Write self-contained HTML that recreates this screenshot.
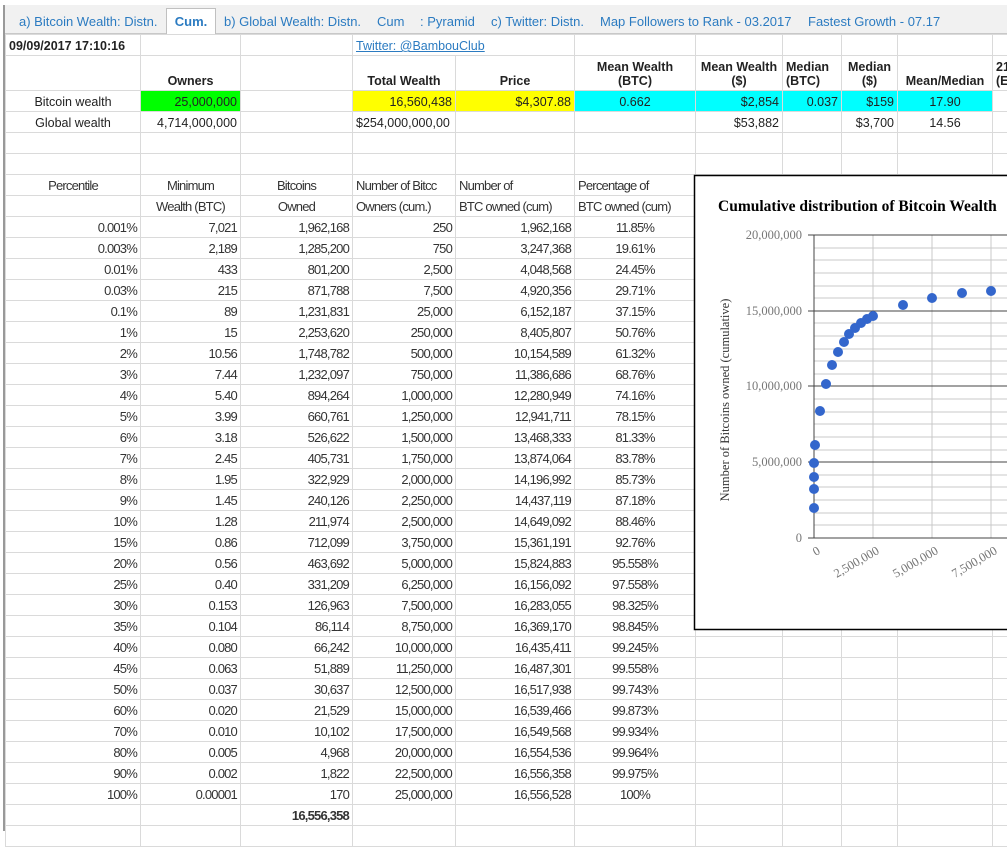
<!DOCTYPE html>
<html><head><meta charset="utf-8">
<style>
*{margin:0;padding:0;box-sizing:border-box}
body{width:1007px;height:831px;background:#fff;font-family:"Liberation Sans",Arial,sans-serif;position:relative;overflow:hidden;color:#222}
#tabs{position:absolute;left:4px;top:5px;width:1003px;height:29px;background:#f1f1f1;border-bottom:1px solid #c8c8c8}
.tab{position:absolute;top:8px;font-size:13px;color:#2b7bc1;white-space:nowrap}
#act{position:absolute;left:166px;top:8px;width:50px;height:27px;background:#fff;border:1px solid #c0c0c0;border-bottom:none;font-size:13px;color:#2b7bc1;font-weight:bold;text-align:center;padding-top:5px}
#lb{position:absolute;left:3px;top:5px;width:2px;height:826px;background:#999}
table{position:absolute;left:5px;top:34px;width:1007px;border-collapse:collapse;table-layout:fixed}
td{border:1px solid #dadada;height:21px;font-size:12.5px;padding:0 3px;white-space:nowrap;overflow:hidden;text-align:right;vertical-align:bottom;padding-bottom:2px}
.c{text-align:center}.l{text-align:left}.b{font-weight:bold}
.h2 td{height:35px;line-height:14px;font-weight:bold}
.g{background:#00ff00}.y{background:#ffff00}.cy{background:#00ffff}
.d td{font-size:13px;letter-spacing:-0.8px;color:#333}
a{color:#2b7bc1}
</style></head><body>
<div id="tabs"></div>
<div class="tab" style="left:19px;top:14px">a) Bitcoin Wealth: Distn.</div>
<div id="act">Cum.</div>
<div class="tab" style="left:224px;top:14px">b) Global Wealth: Distn.</div>
<div class="tab" style="left:377px;top:14px">Cum</div>
<div class="tab" style="left:420px;top:14px">: Pyramid</div>
<div class="tab" style="left:491px;top:14px">c) Twitter: Distn.</div>
<div class="tab" style="left:600px;top:14px">Map Followers to Rank - 03.2017</div>
<div class="tab" style="left:808px;top:14px">Fastest Growth - 07.17</div>
<table>
<colgroup><col style="width:135px"><col style="width:100px"><col style="width:112px"><col style="width:103px"><col style="width:119px"><col style="width:121px"><col style="width:87px"><col style="width:59px"><col style="width:56px"><col style="width:95px"><col style="width:20px"></colgroup>
<tr><td class="l b">09/09/2017 17:10:16</td><td></td><td></td><td class="l" colspan="2"><a href="#">Twitter: @BambouClub</a></td><td></td><td></td><td></td><td></td><td></td><td></td></tr>
<tr class="h2"><td></td><td class="c">Owners</td><td></td><td class="c">Total Wealth</td><td class="c">Price</td><td class="c">Mean Wealth<br>(BTC)</td><td class="c">Mean Wealth<br>($)</td><td class="l">Median<br>(BTC)</td><td class="c">Median<br>($)</td><td class="c">Mean/Median</td><td class="l">21<br>(E</td></tr>
<tr><td class="c">Bitcoin wealth</td><td class="g">25,000,000</td><td></td><td class="y">16,560,438</td><td class="y">$4,307.88</td><td class="cy c">0.662</td><td class="cy">$2,854</td><td class="cy">0.037</td><td class="cy">$159</td><td class="cy c">17.90</td><td></td></tr>
<tr><td class="c">Global wealth</td><td>4,714,000,000</td><td></td><td class="l">$254,000,000,00</td><td></td><td></td><td>$53,882</td><td></td><td>$3,700</td><td class="c">14.56</td><td></td></tr>
<tr><td></td><td></td><td></td><td></td><td></td><td></td><td></td><td></td><td></td><td></td><td></td></tr>
<tr><td></td><td></td><td></td><td></td><td></td><td></td><td></td><td></td><td></td><td></td><td></td></tr>
<tr class="d"><td class="c">Percentile</td><td class="c">Minimum</td><td class="c">Bitcoins</td><td class="l">Number of Bitcc</td><td class="l">Number of</td><td class="l">Percentage of</td><td></td><td></td><td></td><td></td><td></td></tr>
<tr class="d"><td></td><td class="c">Wealth (BTC)</td><td class="c">Owned</td><td class="l">Owners (cum.)</td><td class="l">BTC owned (cum)</td><td class="l">BTC owned (cum)</td><td></td><td></td><td></td><td></td><td></td></tr>
<tr class="d"><td>0.001%</td><td>7,021</td><td>1,962,168</td><td>250</td><td>1,962,168</td><td class="c">11.85%</td><td></td><td></td><td></td><td></td><td></td></tr>
<tr class="d"><td>0.003%</td><td>2,189</td><td>1,285,200</td><td>750</td><td>3,247,368</td><td class="c">19.61%</td><td></td><td></td><td></td><td></td><td></td></tr>
<tr class="d"><td>0.01%</td><td>433</td><td>801,200</td><td>2,500</td><td>4,048,568</td><td class="c">24.45%</td><td></td><td></td><td></td><td></td><td></td></tr>
<tr class="d"><td>0.03%</td><td>215</td><td>871,788</td><td>7,500</td><td>4,920,356</td><td class="c">29.71%</td><td></td><td></td><td></td><td></td><td></td></tr>
<tr class="d"><td>0.1%</td><td>89</td><td>1,231,831</td><td>25,000</td><td>6,152,187</td><td class="c">37.15%</td><td></td><td></td><td></td><td></td><td></td></tr>
<tr class="d"><td>1%</td><td>15</td><td>2,253,620</td><td>250,000</td><td>8,405,807</td><td class="c">50.76%</td><td></td><td></td><td></td><td></td><td></td></tr>
<tr class="d"><td>2%</td><td>10.56</td><td>1,748,782</td><td>500,000</td><td>10,154,589</td><td class="c">61.32%</td><td></td><td></td><td></td><td></td><td></td></tr>
<tr class="d"><td>3%</td><td>7.44</td><td>1,232,097</td><td>750,000</td><td>11,386,686</td><td class="c">68.76%</td><td></td><td></td><td></td><td></td><td></td></tr>
<tr class="d"><td>4%</td><td>5.40</td><td>894,264</td><td>1,000,000</td><td>12,280,949</td><td class="c">74.16%</td><td></td><td></td><td></td><td></td><td></td></tr>
<tr class="d"><td>5%</td><td>3.99</td><td>660,761</td><td>1,250,000</td><td>12,941,711</td><td class="c">78.15%</td><td></td><td></td><td></td><td></td><td></td></tr>
<tr class="d"><td>6%</td><td>3.18</td><td>526,622</td><td>1,500,000</td><td>13,468,333</td><td class="c">81.33%</td><td></td><td></td><td></td><td></td><td></td></tr>
<tr class="d"><td>7%</td><td>2.45</td><td>405,731</td><td>1,750,000</td><td>13,874,064</td><td class="c">83.78%</td><td></td><td></td><td></td><td></td><td></td></tr>
<tr class="d"><td>8%</td><td>1.95</td><td>322,929</td><td>2,000,000</td><td>14,196,992</td><td class="c">85.73%</td><td></td><td></td><td></td><td></td><td></td></tr>
<tr class="d"><td>9%</td><td>1.45</td><td>240,126</td><td>2,250,000</td><td>14,437,119</td><td class="c">87.18%</td><td></td><td></td><td></td><td></td><td></td></tr>
<tr class="d"><td>10%</td><td>1.28</td><td>211,974</td><td>2,500,000</td><td>14,649,092</td><td class="c">88.46%</td><td></td><td></td><td></td><td></td><td></td></tr>
<tr class="d"><td>15%</td><td>0.86</td><td>712,099</td><td>3,750,000</td><td>15,361,191</td><td class="c">92.76%</td><td></td><td></td><td></td><td></td><td></td></tr>
<tr class="d"><td>20%</td><td>0.56</td><td>463,692</td><td>5,000,000</td><td>15,824,883</td><td class="c">95.558%</td><td></td><td></td><td></td><td></td><td></td></tr>
<tr class="d"><td>25%</td><td>0.40</td><td>331,209</td><td>6,250,000</td><td>16,156,092</td><td class="c">97.558%</td><td></td><td></td><td></td><td></td><td></td></tr>
<tr class="d"><td>30%</td><td>0.153</td><td>126,963</td><td>7,500,000</td><td>16,283,055</td><td class="c">98.325%</td><td></td><td></td><td></td><td></td><td></td></tr>
<tr class="d"><td>35%</td><td>0.104</td><td>86,114</td><td>8,750,000</td><td>16,369,170</td><td class="c">98.845%</td><td></td><td></td><td></td><td></td><td></td></tr>
<tr class="d"><td>40%</td><td>0.080</td><td>66,242</td><td>10,000,000</td><td>16,435,411</td><td class="c">99.245%</td><td></td><td></td><td></td><td></td><td></td></tr>
<tr class="d"><td>45%</td><td>0.063</td><td>51,889</td><td>11,250,000</td><td>16,487,301</td><td class="c">99.558%</td><td></td><td></td><td></td><td></td><td></td></tr>
<tr class="d"><td>50%</td><td>0.037</td><td>30,637</td><td>12,500,000</td><td>16,517,938</td><td class="c">99.743%</td><td></td><td></td><td></td><td></td><td></td></tr>
<tr class="d"><td>60%</td><td>0.020</td><td>21,529</td><td>15,000,000</td><td>16,539,466</td><td class="c">99.873%</td><td></td><td></td><td></td><td></td><td></td></tr>
<tr class="d"><td>70%</td><td>0.010</td><td>10,102</td><td>17,500,000</td><td>16,549,568</td><td class="c">99.934%</td><td></td><td></td><td></td><td></td><td></td></tr>
<tr class="d"><td>80%</td><td>0.005</td><td>4,968</td><td>20,000,000</td><td>16,554,536</td><td class="c">99.964%</td><td></td><td></td><td></td><td></td><td></td></tr>
<tr class="d"><td>90%</td><td>0.002</td><td>1,822</td><td>22,500,000</td><td>16,556,358</td><td class="c">99.975%</td><td></td><td></td><td></td><td></td><td></td></tr>
<tr class="d"><td>100%</td><td>0.00001</td><td>170</td><td>25,000,000</td><td>16,556,528</td><td class="c">100%</td><td></td><td></td><td></td><td></td><td></td></tr>
<tr class="d"><td></td><td></td><td class="b">16,556,358</td><td></td><td></td><td></td><td></td><td></td><td></td><td></td><td></td></tr>
<tr class="d"><td></td><td></td><td></td><td></td><td></td><td></td><td></td><td></td><td></td><td></td><td></td></tr>
</table>
<div id="lb"></div>
<svg style="position:absolute;left:0;top:0" width="1007" height="831" font-family="Liberation Serif,serif">
<rect x="694.5" y="175.5" width="320" height="454" fill="#fff" stroke="#000" stroke-width="1.5"/>
<text x="718" y="211" font-size="15.5" font-weight="bold" fill="#000">Cumulative distribution of Bitcoin Wealth</text>
<g stroke="#c8c8c8" stroke-width="1">
<line x1="814" y1="248" x2="1007" y2="248"/><line x1="814" y1="260" x2="1007" y2="260"/><line x1="814" y1="273" x2="1007" y2="273"/><line x1="814" y1="286" x2="1007" y2="286"/><line x1="814" y1="298" x2="1007" y2="298"/>
<line x1="814" y1="323" x2="1007" y2="323"/><line x1="814" y1="336" x2="1007" y2="336"/><line x1="814" y1="349" x2="1007" y2="349"/><line x1="814" y1="361" x2="1007" y2="361"/><line x1="814" y1="374" x2="1007" y2="374"/>
<line x1="814" y1="399" x2="1007" y2="399"/><line x1="814" y1="412" x2="1007" y2="412"/><line x1="814" y1="424" x2="1007" y2="424"/><line x1="814" y1="437" x2="1007" y2="437"/><line x1="814" y1="450" x2="1007" y2="450"/>
<line x1="814" y1="475" x2="1007" y2="475"/><line x1="814" y1="487" x2="1007" y2="487"/><line x1="814" y1="500" x2="1007" y2="500"/><line x1="814" y1="513" x2="1007" y2="513"/><line x1="814" y1="525" x2="1007" y2="525"/>
<line x1="873" y1="235" x2="873" y2="538"/><line x1="932" y1="235" x2="932" y2="538"/><line x1="991" y1="235" x2="991" y2="538"/>
</g>
<g stroke="#444" stroke-width="1">
<line x1="808" y1="235" x2="1007" y2="235"/><line x1="808" y1="311" x2="1007" y2="311"/><line x1="808" y1="386" x2="1007" y2="386"/><line x1="808" y1="462" x2="1007" y2="462"/>
<line x1="808" y1="538" x2="1007" y2="538"/><line x1="814" y1="235" x2="814" y2="538"/>
</g>
<g font-size="12.5" fill="#777" text-anchor="end">
<text x="802" y="239">20,000,000</text><text x="802" y="315">15,000,000</text><text x="802" y="390">10,000,000</text><text x="802" y="466">5,000,000</text><text x="802" y="542">0</text>
<text transform="translate(821,553) rotate(-30)">0</text>
<text transform="translate(880,553) rotate(-30)">2,500,000</text>
<text transform="translate(939,553) rotate(-30)">5,000,000</text>
<text transform="translate(998,553) rotate(-30)">7,500,000</text>
</g>
<text transform="translate(729,400) rotate(-90)" font-size="12.5" fill="#333" text-anchor="middle">Number of Bitcoins owned (cumulative)</text>
<g fill="#3366cc">
<circle cx="814" cy="508" r="5"/><circle cx="814" cy="489" r="5"/><circle cx="814" cy="477" r="5"/><circle cx="814" cy="463" r="5"/><circle cx="815" cy="445" r="5"/>
<circle cx="820" cy="411" r="5"/><circle cx="826" cy="384" r="5"/><circle cx="832" cy="365" r="5"/><circle cx="838" cy="352" r="5"/><circle cx="844" cy="342" r="5"/>
<circle cx="849" cy="334" r="5"/><circle cx="855" cy="328" r="5"/><circle cx="861" cy="323" r="5"/><circle cx="867" cy="319" r="5"/><circle cx="873" cy="316" r="5"/>
<circle cx="903" cy="305" r="5"/><circle cx="932" cy="298" r="5"/><circle cx="962" cy="293" r="5"/><circle cx="991" cy="291" r="5"/>
</g>
</svg>
</body></html>
